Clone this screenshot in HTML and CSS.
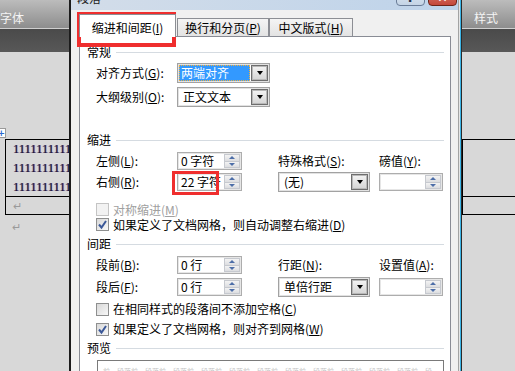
FILE: index.html
```html
<!DOCTYPE html>
<html lang="zh-CN">
    <head>
        <meta charset="UTF-8" />
        <title>段落</title>
        <link rel="stylesheet" href="styles.css">
    </head>
    <body>
        <!-- 뒤쪽 워드 화면 -->
        <div class="word">
            <div class="ribbon">
                <span>字体</span>
                <span>样式</span>
            </div>
            <div class="ruler"></div>
            <div class="doc">
                <div class="tbl">
                    <span class="tbl-move">+</span>
                    <div class="td td-txt">1111111111<br>1111111111<br>1111111111</div>
                    <div class="td"></div>
                    <div class="td td-ret">↵</div>
                    <div class="td"></div>
                </div>
                <p class="ret">↵</p>
            </div>
        </div>

        <!-- 단락 대화상자 -->
        <div class="dlg">
            <div class="titlebar">
                <span class="ttl">段落</span>
                <span class="cap help">?</span>
                <span class="cap close">✕</span>
            </div>
            <div class="dlg-body">
                <div class="tabs">
                    <span class="tab on">缩进和间距(<u>I</u>)</span>
                    <span class="tab t2">换行和分页(<u>P</u>)</span>
                    <span class="tab t3">中文版式(<u>H</u>)</span>
                </div>
                <div class="page">
                    <!-- 常规 -->
                    <div class="sec-h">常规</div>
                    <div class="form f1">
                        <label>对齐方式(<u>G</u>):</label>
                        <div class="sel"><span class="val hl">两端对齐</span><i class="arr"></i></div>
                        <label>大纲级别(<u>O</u>):</label>
                        <div class="sel"><span class="val">正文文本</span><i class="arr"></i></div>
                    </div>

                    <!-- 缩进 -->
                    <div class="sec-h s2">缩进</div>
                    <div class="form f2">
                        <label>左侧(<u>L</u>):</label>
                        <div class="spin"><span class="val">0 字符</span><span class="btns"><i class="up"></i><i class="dn"></i></span></div>
                        <label>特殊格式(<u>S</u>):</label>
                        <label>磅值(<u>Y</u>):</label>
                        <label>右侧(<u>R</u>):</label>
                        <div class="spin"><span class="val">22 字符</span><span class="btns"><i class="up"></i><i class="dn"></i></span></div>
                        <div class="sel sel-s"><span class="val">(无)</span><i class="arr"></i></div>
                        <div class="spin spin-r"><span class="val"></span><span class="btns"><i class="up"></i><i class="dn"></i></span></div>
                    </div>
                    <div class="chk c1 off"><span class="box"></span><span>对称缩进(<u>M</u>)</span></div>
                    <div class="chk"><span class="box"><svg viewBox="0 0 11 11"><path d="M2 5.5 L4.5 8.5 L9 2" /></svg></span><span>如果定义了文档网格，则自动调整右缩进(<u>D</u>)</span></div>

                    <!-- 间距 -->
                    <div class="sec-h s3">间距</div>
                    <div class="form f3">
                        <label>段前(<u>B</u>):</label>
                        <div class="spin"><span class="val">0 行</span><span class="btns"><i class="up"></i><i class="dn"></i></span></div>
                        <label>行距(<u>N</u>):</label>
                        <label>设置值(<u>A</u>):</label>
                        <label>段后(<u>F</u>):</label>
                        <div class="spin"><span class="val">0 行</span><span class="btns"><i class="up"></i><i class="dn"></i></span></div>
                        <div class="sel sel-s"><span class="val">单倍行距</span><i class="arr"></i></div>
                        <div class="spin spin-r"><span class="val"></span><span class="btns"><i class="up"></i><i class="dn"></i></span></div>
                    </div>
                    <div class="chk c3"><span class="box"></span><span>在相同样式的段落间不添加空格(<u>C</u>)</span></div>
                    <div class="chk c4"><span class="box"><svg viewBox="0 0 11 11"><path d="M2 5.5 L4.5 8.5 L9 2" /></svg></span><span>如果定义了文档网格，则对齐到网格(<u>W</u>)</span></div>

                    <!-- 预览 -->
                    <div class="sec-h s4">预览</div>
                    <div class="preview">前一段落前一段落前一段落前一段落前一段落前一段落前一段落前一段落前一段落前一段落前一段落前一段落</div>
                </div>
            </div>
        </div>

        <!-- 빨간 표시 박스 -->
        <div class="mark mark-tab"></div>
        <div class="mark mark-spin"></div>
    </body>
</html>
```

FILE: styles.css
```css
* {
    box-sizing: border-box;
}
body {
    margin: 0;
    width: 515px;
    height: 371px;
    overflow: hidden;
    position: relative;
    font-family: "Noto Sans CJK SC", "Liberation Sans", sans-serif;
    font-size: 12px;
    line-height: 14px;
    color: #000;
    background: #d8d8d8;
}
u {
    text-decoration-thickness: 1px;
}

/* 워드 리본 */
.ribbon {
    height: 29px;
    display: flex;
    justify-content: space-between;
    align-items: center;
    padding: 8px 17px 0 0;
    background: linear-gradient(#bcbcbc, #8d8d8d);
    border-bottom: 1px solid #cfcfcf;
    color: #f4f4f4;
}
.ruler {
    height: 23px;
    background: linear-gradient(#4a4a4a, #585858);
}

/* 문서 영역 */
.doc {
    padding-top: 87px;
}
.tbl {
    position: relative;
    margin-left: 5px;
    width: 560px;
    display: grid;
    grid-template-columns: 457px 1fr;
    border-top: 1px solid #000;
    border-left: 1px solid #000;
}
.td {
    border-right: 1px solid #000;
    border-bottom: 1px solid #000;
    height: 18px;
}
.td-txt {
    height: 57px;
    padding-left: 7px;
    font-family: "Liberation Serif", serif;
    font-size: 12.5px;
    line-height: 19px;
    color: #12123a;
    /* 클리어타입 번짐 흉내 */
    text-shadow: 0.6px 0 0 rgba(150, 30, 60, 0.6), -0.6px 0 0 rgba(40, 90, 190, 0.5);
}
.td-txt + .td {
    height: 57px;
}
.td-ret,
.ret {
    padding-left: 7px;
    color: #9a9a9a;
    font-size: 11px;
    line-height: 17px;
}
.ret {
    margin: 4px 0 0 5px;
    line-height: 14px;
}
/* 표 이동 핸들 */
.tbl-move {
    position: absolute;
    left: -10px;
    top: -12px;
    width: 10px;
    height: 10px;
    border: 1px solid #9a9a9a;
    background: #fff;
    color: #2d6ad0;
    font: bold 9px/8px "DejaVu Sans", sans-serif;
    text-align: right;
}

/* 대화상자 */
.dlg {
    position: absolute;
    left: 69px;
    top: -20px;
    width: 390px;
    height: 420px;
    background: #f0f0f0;
    border-left: 2px solid #1c1c1c;
    border-right: 1px solid #a3a3a3;
    box-shadow: 1px 0 0 #e6e6e6, 2px 0 0 #3cb4e5, 3px 0 0 #2a2a2a;
}
.titlebar {
    height: 30px;
    display: flex;
    align-items: flex-end;
    padding: 0 1px 0 6px;
    background: linear-gradient(90deg, #d3dde9, #bed3ea);
}
.ttl {
    flex: 1;
    margin-bottom: 5px;
    color: #222;
}
.cap {
    width: 29px;
    height: 20px;
    margin-bottom: 4px;
    display: flex;
    align-items: flex-end;
    justify-content: center;
    border-radius: 0 0 4px 4px;
    font: bold 13px/1 "DejaVu Sans", sans-serif;
    padding-bottom: 1px;
}
.help {
    margin-right: 3px;
    border: 1px solid #6a7d98;
    background: linear-gradient(#e4ecf5, #c4d4e6);
    color: #26334a;
}
.close {
    border: 1px solid #6e2418;
    background: linear-gradient(#e08a7c, #c4473a);
    color: #fff;
    font-size: 12px;
}

.dlg-body {
    padding: 4px 7px 0 8px;
}

/* 탭 */
.tabs {
    position: relative;
    z-index: 1;
    height: 22px;
    display: flex;
    align-items: flex-end;
}
.tab {
    height: 18px;
    border: 1px solid #8c8e94;
    border-bottom: none;
    background: linear-gradient(#f4f4f4, #e3e3e3);
    text-align: center;
    line-height: 17px;
}
.tab.on {
    width: 97px;
    height: 23px;
    margin-bottom: -1px;
    padding-top: 4px;
    background: #fff;
}
.t2 {
    width: 92px;
    margin-left: 1px;
}
.t3 {
    width: 84px;
}

/* 탭 내용 */
.page {
    height: 360px;
    padding: 0 6px 0 7px;
    border: 1px solid #898c95;
    background: #fff;
}
.sec-h {
    display: flex;
    align-items: center;
    gap: 5px;
    height: 14px;
    margin-top: 8px;
}
.sec-h::after {
    content: "";
    flex: 1;
    border-top: 1px solid #d5dbe1;
}
.s2 {
    margin-top: 26px;
}
.s3,
.s4 {
    margin-top: 5px;
}

.form {
    display: grid;
    grid-template-columns: 81px 101px 101px 64px;
    align-items: center;
    margin: 4px 0 0 9px;
}
.f1 {
    grid-template-columns: 81px 93px;
    grid-template-rows: 20px 20px;
    row-gap: 4px;
}
.f2 {
    grid-template-rows: 20px 20px;
    row-gap: 1px;
}
.f3 {
    grid-template-rows: 20px 20px;
    row-gap: 2px;
}

/* 드롭다운 */
.sel {
    display: flex;
    align-items: center;
    width: 93px;
    height: 20px;
    padding: 1px;
    border: 1px solid #a2a2a2;
    box-shadow: inset 0 0 0 1px #e2e2e2;
    background: #fff;
}
.sel .val {
    flex: 1;
    padding-left: 4px;
    white-space: nowrap;
}
.sel .hl {
    height: 16px;
    margin-right: 1px;
    padding-left: 2px;
    line-height: 16px;
    background: #3399ff;
    color: #fff;
    outline: 1px dotted #f0b040;
    outline-offset: -1px;
}
.arr {
    width: 17px;
    height: 16px;
    display: flex;
    align-items: center;
    justify-content: center;
    border: 1px solid #6e6e6e;
    box-shadow: inset 0 0 0 1px #b8b8b8;
    background: linear-gradient(#f4f4f4, #d4d4d4);
}
.arr::before {
    content: "";
    border-left: 3.5px solid transparent;
    border-right: 3.5px solid transparent;
    border-top: 4px solid #000;
}
.sel-s {
    width: 92px;
}

/* 스핀 입력 */
.spin {
    display: flex;
    width: 65px;
    height: 18px;
    padding: 1px;
    border: 1px solid #adadad;
    box-shadow: inset 0 0 0 1px #e6e6e6;
    background: #fff;
}
.spin .val {
    flex: 1;
    padding-left: 2px;
    line-height: 14px;
    white-space: nowrap;
}
.btns {
    width: 16px;
    display: flex;
    flex-direction: column;
}
.btns i {
    flex: 1;
    display: flex;
    align-items: center;
    justify-content: center;
    border: 1px solid #c6c9cf;
    background: linear-gradient(#f3f3f3, #dcdde0);
}
.btns i + i {
    border-top: none;
}
.up::before {
    content: "";
    border-left: 3px solid transparent;
    border-right: 3px solid transparent;
    border-bottom: 3px solid #4d6ea8;
}
.dn::before {
    content: "";
    border-left: 3px solid transparent;
    border-right: 3px solid transparent;
    border-top: 3px solid #4d6ea8;
}
.spin-r {
    width: 64px;
}

/* 체크박스 */
.chk {
    display: flex;
    align-items: center;
    gap: 4px;
    height: 15px;
    margin-left: 9px;
    white-space: nowrap;
}
.c1 {
    margin-top: 10px;
}
.c3 {
    margin-top: 5px;
    height: 14px;
}
.c4 {
    margin-top: 6px;
    height: 14px;
}
.box {
    width: 13px;
    height: 13px;
    padding: 0;
    border: 1px solid #8e8f8f;
    background: linear-gradient(135deg, #d8d8d8, #f8f8f8);
}
.box svg {
    display: block;
    width: 11px;
    height: 11px;
}
.box path {
    fill: none;
    stroke: #3b5898;
    stroke-width: 2;
}
.off {
    color: #a0a0a0;
}
.off .box {
    border-color: #c4c4c4;
    background: #f2f2f2;
}

/* 미리보기 */
.preview {
    width: 347px;
    height: 40px;
    margin: 5px 0 0 10px;
    padding: 6px 5px 0;
    border: 1px solid #7a7a7a;
    color: #c4c4c4;
    font-size: 7px;
    line-height: 9px;
    overflow: hidden;
}

/* 빨간 표시 */
.mark {
    position: absolute;
    border: 4px solid #ef2e2e;
}
.mark-tab {
    left: 77px;
    top: 12px;
    width: 99px;
    height: 35px;
}
.mark-spin {
    left: 172px;
    top: 171px;
    width: 47px;
    height: 24px;
    border-width: 3px;
}
```
